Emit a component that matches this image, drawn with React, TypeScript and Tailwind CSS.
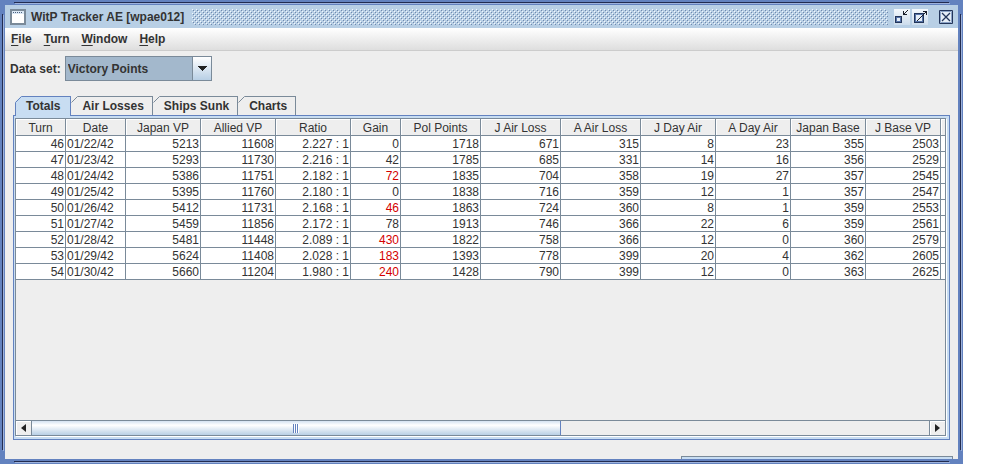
import { useState } from "react";
import { clsx } from "clsx";

const MENUS = ["File", "Turn", "Window", "Help"];
const TABS = ["Totals", "Air Losses", "Ships Sunk", "Charts"];

const COLUMNS = [
  { label: "Turn", width: 50 },
  { label: "Date", width: 60 },
  { label: "Japan VP", width: 75 },
  { label: "Allied VP", width: 75 },
  { label: "Ratio", width: 75 },
  { label: "Gain", width: 50 },
  { label: "Pol Points", width: 80 },
  { label: "J Air Loss", width: 80 },
  { label: "A Air Loss", width: 80 },
  { label: "J Day Air", width: 75 },
  { label: "A Day Air", width: 75 },
  { label: "Japan Base", width: 75 },
  { label: "J Base VP", width: 75 },
  { label: "", width: 75 },
];

const GAIN = 5;

const ROWS = [
  ["46", "01/22/42", "5213", "11608", "2.227 : 1", "0", "1718", "671", "315", "8", "23", "355", "2503", ""],
  ["47", "01/23/42", "5293", "11730", "2.216 : 1", "42", "1785", "685", "331", "14", "16", "356", "2529", ""],
  ["48", "01/24/42", "5386", "11751", "2.182 : 1", "72", "1835", "704", "358", "19", "27", "357", "2545", ""],
  ["49", "01/25/42", "5395", "11760", "2.180 : 1", "0", "1838", "716", "359", "12", "1", "357", "2547", ""],
  ["50", "01/26/42", "5412", "11731", "2.168 : 1", "46", "1863", "724", "360", "8", "1", "359", "2553", ""],
  ["51", "01/27/42", "5459", "11856", "2.172 : 1", "78", "1913", "746", "366", "22", "6", "359", "2561", ""],
  ["52", "01/28/42", "5481", "11448", "2.089 : 1", "430", "1822", "758", "366", "12", "0", "360", "2579", ""],
  ["53", "01/29/42", "5624", "11408", "2.028 : 1", "183", "1393", "778", "399", "20", "4", "362", "2605", ""],
  ["54", "01/30/42", "5660", "11204", "1.980 : 1", "240", "1428", "790", "399", "12", "0", "363", "2625", ""],
];

// turns whose gain is flagged in red
const FLAGGED = ["48", "50", "52", "53", "54"];

function WindowIcon() {
  return (
    <svg width="16" height="16" viewBox="0 0 16 16" shapeRendering="crispEdges">
      <rect x="0" y="0" width="16" height="16" fill="#7a8a99" />
      <rect x="2" y="2" width="12" height="3" fill="#dbe8f5" />
      <path d="M3 3h1v1H3zM5 3h1v1H5zM7 3h1v1H7zM9 3h1v1H9zM11 3h1v1h-1z" fill="#4a5f7c" />
      <rect x="2" y="5" width="12" height="9" fill="#fff" />
    </svg>
  );
}

// The dotted grip texture that fills the free part of the title bar
function Bumps() {
  return (
    <svg aria-hidden="true" className="h-4 w-full" shapeRendering="crispEdges">
      <defs>
        <pattern id="bumps" width="4" height="4" patternUnits="userSpaceOnUse">
          <path d="M0 0h1v1H0zM2 2h1v1H2z" fill="#f2f7fc" />
          <path d="M1 1h1v1H1zM3 3h1v1H3z" fill="#7089ad" />
        </pattern>
      </defs>
      <rect width="100%" height="16" fill="url(#bumps)" />
    </svg>
  );
}

function TitleBar() {
  return (
    <header className="flex h-[23px] shrink-0 items-center bg-[#b8cfe5] pr-1 pl-[5px]">
      <WindowIcon />
      <h1 className="ml-[5px] text-[12px] leading-4 font-bold">WitP Tracker AE [wpae012]</h1>
      <div className="mr-[6px] ml-2 flex-1">
        <Bumps />
      </div>
      <button aria-label="Minimize" className="h-4 w-4 bg-linear-to-b from-[#f4f8fc] to-[#ccdcec]">
        <svg width="16" height="16" viewBox="0 0 16 16" shapeRendering="crispEdges">
          <path d="M1 7h7v7H1z" fill="#23355a" />
          <path d="M2 8h5v5H2z" fill="#5673a8" />
          <path d="M3 9h3v3H3z" fill="#e6eef7" />
          <path d="M9 2h1v3h3v1H9zM10 4h1v1h-1zM11 3h1v1h-1zM12 2h1v1h-1zM13 1h1v1h-1z" fill="#1b1f2a" />
        </svg>
      </button>
      <button aria-label="Maximize" className="ml-[2px] h-4 w-4 bg-linear-to-b from-[#f4f8fc] to-[#ccdcec]">
        <svg width="16" height="16" viewBox="0 0 16 16" shapeRendering="crispEdges">
          <path d="M2 4h10v10H2z" fill="#23355a" />
          <path d="M3 5h8v8H3z" fill="#5673a8" />
          <path d="M4 6h6v6H4z" fill="#e6eef7" />
          <path d="M5 11h1v1H5zM6 10h1v1H6zM7 9h1v1H7zM8 8h1v1H8zM9 7h1v1H9zM10 6h1v1h-1zM11 5h1v1h-1zM12 4h1v1h-1zM13 3h1v1h-1zM11 2h4v4h-1V3h-3z" fill="#1b1f2a" />
        </svg>
      </button>
      <button aria-label="Close" className="ml-[10px] h-4 w-4">
        <svg width="16" height="16" viewBox="0 0 16 16">
          <path d="M1.5 1.5h13v13h-13z" fill="#e6eef7" stroke="#23355a" />
          <path d="M2.5 2.5h11v11h-11z" fill="none" stroke="#8ba3c7" />
          <path d="M4 4l8 8M12 4l-8 8" stroke="#23355a" strokeWidth="1.3" />
        </svg>
      </button>
    </header>
  );
}

function MenuBar() {
  return (
    <nav className="flex h-[23px] shrink-0 items-center gap-3 border-b border-[#ccc] bg-linear-to-b from-white to-[#dedede] px-[6px]">
      {MENUS.map((menu) => (
        <button key={menu} className="text-[12px] leading-4 font-bold">
          <span className="underline underline-offset-2">{menu[0]}</span>
          {menu.slice(1)}
        </button>
      ))}
    </nav>
  );
}

function DataSet() {
  return (
    <div className="flex h-[45px] shrink-0 items-start pt-[5px] pl-[5px]">
      <label htmlFor="dataset" className="text-[12px] leading-[27px] font-bold">
        Data set:
      </label>
      <div className="ml-[4px] grid h-[25px] w-[147px] border border-[#7a8a99] bg-[#a3b8cc]">
        <select
          id="dataset"
          className="col-start-1 row-start-1 appearance-none bg-transparent pl-[2px] text-[12px] font-bold outline-none"
        >
          <option>Victory Points</option>
        </select>
        <span className="pointer-events-none col-start-1 row-start-1 flex w-[19px] items-center justify-center justify-self-end border-l border-[#7a8a99] bg-linear-to-b from-white to-[#b8cfe5]">
          <svg width="10" height="5" viewBox="0 0 10 5" shapeRendering="crispEdges">
            <path d="M0 0h10L5 5z" fill="#222" />
          </svg>
        </span>
      </div>
    </div>
  );
}

interface TabProps {
  label: string;
  active: boolean;
  onSelect: () => void;
}

function Tab({ label, active, onSelect }: TabProps) {
  return (
    <button
      role="tab"
      aria-selected={active}
      onClick={onSelect}
      className={clsx("flex items-stretch text-[12px] font-bold", active ? "z-10 -mb-px h-5" : "h-[19px]")}
    >
      <svg width="7" height="20" viewBox="0 0 7 20" className="shrink-0">
        <path d="M7 0H6L0 6v14h7z" fill={active ? "#c8ddf2" : "#eee"} />
        <path
          d={active ? "M7 .5H6.5L.5 6.5V20" : "M7 .5H6.5L.5 6.5"}
          fill="none"
          stroke={active ? "#6382bf" : "#7a8a99"}
        />
      </svg>
      <span
        className={clsx(
          "border-t border-r pl-1 leading-[18px]",
          active ? "border-[#6382bf] bg-[#c8ddf2] pr-[10px]" : "border-[#7a8a99] bg-[#eee] pr-2"
        )}
      >
        {label}
      </span>
    </button>
  );
}

function TotalsTable() {
  return (
    <table className="w-[1000px] table-fixed border-separate border-spacing-0 text-[12px] leading-[14px]">
      <colgroup>
        {COLUMNS.map((col, i) => (
          <col key={i} style={{ width: col.width }} />
        ))}
      </colgroup>
      <thead>
        <tr>
          {COLUMNS.map((col, i) => (
            <th
              key={i}
              className="h-[17px] border-r border-b border-[#7a8a99] bg-[#eee] px-0 pt-[2px] pb-0 text-center font-normal whitespace-nowrap shadow-[inset_1px_1px_0_#fff]"
            >
              {col.label}
            </th>
          ))}
        </tr>
      </thead>
      <tbody>
        {ROWS.map((row) => (
          <tr key={row[0]}>
            {row.map((value, i) => (
              <td
                key={i}
                className={clsx(
                  "h-4 border-r border-b border-[#7a8a99] bg-white px-px pt-px pb-0 whitespace-nowrap",
                  i !== 1 && "text-right",
                  i === GAIN && FLAGGED.includes(row[0]) && "text-[#d40000]"
                )}
              >
                {value}
              </td>
            ))}
          </tr>
        ))}
      </tbody>
    </table>
  );
}

function ScrollBar() {
  return (
    <div className="flex h-4 shrink-0 border-y border-[#7a8a99] bg-[#eee]">
      <button
        aria-label="Scroll left"
        className="flex w-4 items-center justify-center border-r border-[#7a8a99] shadow-[inset_1px_1px_0_#fff]"
      >
        <svg width="5" height="8" viewBox="0 0 5 8">
          <path d="M5 0v8L0 4z" fill="#222" />
        </svg>
      </button>
      <div className="flex flex-1">
        <div className="flex w-[59%] items-center justify-center border-r border-[#6382bf] bg-linear-to-b from-[#d5e3f2] via-white via-30% to-[#b8cfe5]">
          <svg width="6" height="9" viewBox="0 0 6 9" shapeRendering="crispEdges">
            <path d="M0 0h1v9H0zM2 0h1v9H2zM4 0h1v9H4z" fill="#6382bf" />
            <path d="M1 0h1v9H1zM3 0h1v9H3zM5 0h1v9H5z" fill="#fff" />
          </svg>
        </div>
      </div>
      <button
        aria-label="Scroll right"
        className="flex w-4 items-center justify-center border-l border-[#7a8a99] shadow-[inset_1px_1px_0_#fff]"
      >
        <svg width="5" height="8" viewBox="0 0 5 8">
          <path d="M0 0v8l5-4z" fill="#222" />
        </svg>
      </button>
    </div>
  );
}

export default function App() {
  const [tab, setTab] = useState(TABS[0]);

  return (
    <div className="flex min-h-screen bg-white pr-[27px] font-['Liberation_Sans',Arial,sans-serif] text-[#333]">
      <div className="relative flex min-w-0 flex-1 flex-col border-5 border-[#6382bf] bg-[#eee]">
        {/* Etched lines in the frame, stopping short of the corners */}
        <span className="absolute -top-[3px] right-[9px] left-[9px] h-px bg-[#222c50] shadow-[1px_1px_0_#9db2dc]" />
        <span className="absolute right-[9px] -bottom-[3px] left-[9px] h-px bg-[#222c50] shadow-[1px_1px_0_#9db2dc]" />
        <span className="absolute top-[9px] bottom-[9px] -left-[3px] w-px bg-[#222c50] shadow-[1px_1px_0_#9db2dc]" />
        <span className="absolute top-[9px] -right-[3px] bottom-[9px] w-px bg-[#222c50] shadow-[1px_1px_0_#9db2dc]" />

        <TitleBar />
        <MenuBar />
        <DataSet />

        <main className="flex flex-1 flex-col px-2">
          <div role="tablist" className="flex items-start pl-[2px]">
            {TABS.map((label) => (
              <Tab key={label} label={label} active={label === tab} onSelect={() => setTab(label)} />
            ))}
          </div>
          <section className="flex flex-1 flex-col border border-[#6382bf] bg-[#c8ddf2] pt-[2px] pr-[3px] pb-[3px] pl-px">
            <div className="flex flex-1 flex-col border border-b-0 border-[#7a8a99] bg-[#eee] shadow-[1px_1px_0_#fff]">
              <div className="flex-1 overflow-hidden">
                <TotalsTable />
              </div>
              <ScrollBar />
            </div>
          </section>
        </main>

        <footer className="flex h-[19px] shrink-0 items-end justify-end pr-[5px]">
          <div className="h-[3px] w-[272px] border border-b-0 border-[#7a8a99] bg-[#c8ddf2]" />
        </footer>
      </div>
    </div>
  );
}
